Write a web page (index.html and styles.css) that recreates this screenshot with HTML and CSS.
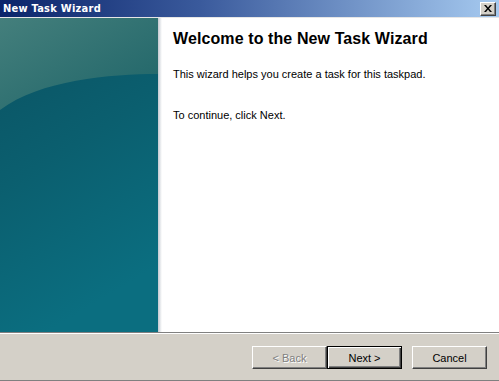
FILE: index.html
```html
<!DOCTYPE html>
<html>
<head>
<meta charset="utf-8">
<link rel="stylesheet" href="styles.css">
</head>
<body>
<div class="window">
  <div class="titlebar">
    <span class="title-text">New Task Wizard</span>
    <button class="close-btn" aria-label="Close">
      <svg width="8" height="7" viewBox="0 0 8 7"><path d="M0 0h2l2 2.5L6 0h2L5 3.5 8 7H6L4 4.5 2 7H0l3-3.5z" fill="#000"/></svg>
    </button>
  </div>
  <div class="title-sep"></div>
  <div class="main">
    <div class="side">
      <svg class="side-art" width="158" height="314" viewBox="0 0 158 314" preserveAspectRatio="none">
        <defs>
          <linearGradient id="deep" x1="0" y1="0" x2="0.3" y2="1">
            <stop offset="0" stop-color="#0b5262"/>
            <stop offset="0.5" stop-color="#0b5f6f"/>
            <stop offset="1" stop-color="#0b6e80"/>
          </linearGradient>
          <linearGradient id="light" x1="0" y1="0" x2="1" y2="1">
            <stop offset="0" stop-color="#447f7c"/>
            <stop offset="1" stop-color="#1e6468"/>
          </linearGradient>
        </defs>
        <rect width="158" height="314" fill="url(#deep)"/>
        <path d="M0 0H158V56C110 56 40 62 0 92Z" fill="url(#light)"/>
      </svg>
    </div>
    <div class="side-shadow"></div>
    <div class="content">
      <h1 class="heading">Welcome to the New Task Wizard</h1>
      <p class="intro">This wizard helps you create a task for this taskpad.</p>
      <p class="hint">To continue, click Next.</p>
    </div>
  </div>
  <div class="divider"></div>
  <div class="footer">
    <button class="btn btn-disabled">&lt; Back</button>
    <button class="btn btn-default">Next &gt;</button>
    <button class="btn btn-cancel">Cancel</button>
  </div>
</div>
</body>
</html>
```

FILE: styles.css
```css
html, body {
  margin: 0;
  padding: 0;
  background: #d4d0c8;
  overflow: hidden;
}
.window {
  width: 499px;
  height: 381px;
  display: flex;
  flex-direction: column;
  font-family: "Liberation Sans", Arial, sans-serif;
  font-size: 11px;
  color: #000;
}
.titlebar {
  height: 17px;
  flex: none;
  display: flex;
  align-items: center;
  justify-content: space-between;
  padding: 0 3px 0 3px;
  background: linear-gradient(to right, #0a246a 0%, #3a5a9c 40%, #a6caf0 100%);
}
.title-text {
  color: #fff;
  font-weight: bold;
  font-size: 11px;
  letter-spacing: 0.25px;
  line-height: 17px;
  font-family: "DejaVu Sans Condensed", "Liberation Sans", sans-serif;
}
.close-btn {
  width: 16px;
  height: 14px;
  padding: 0;
  margin: 0;
  background: #d4d0c8;
  border: 1px solid;
  border-color: #fff #404040 #404040 #fff;
  box-shadow: inset -1px -1px #808080;
  display: flex;
  align-items: center;
  justify-content: center;
}
.title-sep {
  height: 1px;
  flex: none;
  background: #e6e6e6;
}
.main {
  height: 314px;
  flex: none;
  display: flex;
  background: #fff;
}
.side {
  width: 158px;
  flex: none;
}
.side-art {
  display: block;
}
.side-shadow {
  width: 4px;
  flex: none;
  background: linear-gradient(to right, #c4c8d0, #eef0f2 70%, #fff);
}
.content {
  flex: 1;
  padding: 12px 0 0 11px;
}
.heading {
  margin: 0;
  font-size: 16px;
  line-height: 18px;
  font-weight: bold;
  letter-spacing: 0.1px;
}
.intro {
  margin: 20px 0 0;
  line-height: 13px;
}
.hint {
  margin: 28px 0 0;
  line-height: 13px;
}
.divider {
  height: 1px;
  flex: none;
  background: #808080;
  border-bottom: 1px solid #fff;
}
.footer {
  flex: 1;
  display: flex;
  padding: 12px 0 0 252px;
  border-bottom: 1px solid #808080;
}
.btn {
  width: 75px;
  height: 23px;
  padding: 0;
  margin: 0;
  font-family: "Liberation Sans", Arial, sans-serif;
  font-size: 11px;
  color: #000;
  background: #d4d0c8;
  border: 1px solid;
  border-color: #fff #404040 #404040 #fff;
  box-shadow: inset -1px -1px #808080;
}
.btn-disabled {
  color: #808080;
  text-shadow: 1px 1px #fff;
}
.btn-default {
  border: 1px solid #000;
  box-shadow: inset 1px 1px #fff, inset -1px -1px #404040, inset -2px -2px #808080;
}
.btn-cancel {
  margin-left: 10px;
}
```
